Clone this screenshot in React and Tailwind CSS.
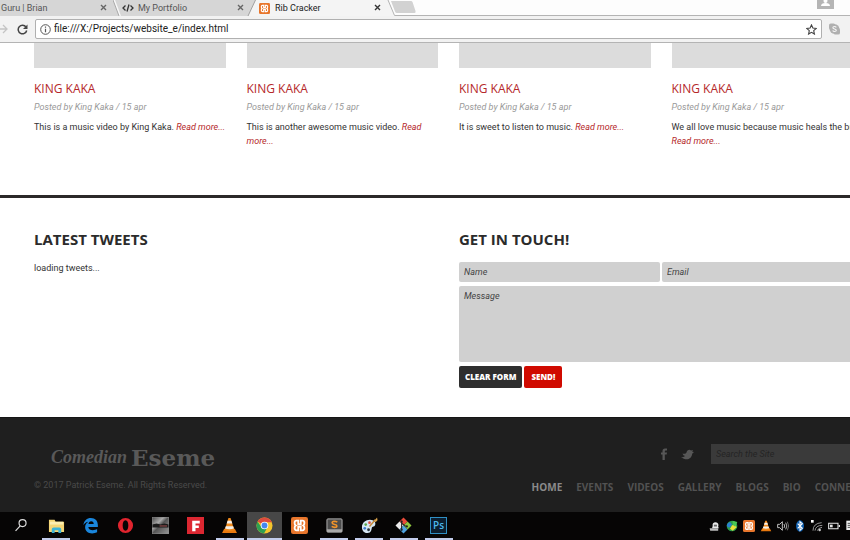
import React from "react";

const posts = [
  { text: "This is a music video by King Kaka." },
  { text: "This is another awesome music video." },
  { text: "It is sweet to listen to music." },
  { text: "We all love music because music heals the brain." },
];

const navItems = ["HOME", "EVENTS", "VIDEOS", "GALLERY", "BLOGS", "BIO", "CONNECT"];

function Close({ dark }) {
  return (
    <button type="button" aria-label="Close tab" className={dark ? "text-[#333]" : "text-[#666]"}>
      <svg width="7" height="7" viewBox="0 0 7 7" className="block" stroke="currentColor" strokeWidth="1.4">
        <path d="M1 1l5 5M6 1L1 6" />
      </svg>
    </button>
  );
}

function Xampp({ size }) {
  return (
    <svg width={size} height={size} viewBox="0 0 16 16" className="block">
      <rect width="16" height="16" rx="2" fill="#e8762c" />
      <path
        d="M5.200 3.500H6.800V6.800H9.200V3.500H10.800Q12.600 3.500 12.600 5.600 12.600 7.300 11.500 8 12.600 8.700 12.600 10.400 12.600 12.500 10.800 12.500H9.200V9.200H6.800V12.500H5.200Q3.400 12.500 3.400 10.400 3.400 8.700 4.500 8 3.400 7.300 3.400 5.600 3.400 3.500 5.200 3.500z"
        fill="none"
        stroke="#fff"
        strokeWidth="1.700"
      />
    </svg>
  );
}

function Cone({ size }) {
  return (
    <svg width={size} height={size} viewBox="0 0 16 16" className="block">
      <path d="M3 11h10l2 4H1z" fill="#e8790f" />
      <path d="M7 1h2l3.500 11.500q-4.500 1.500-9 0z" fill="#f08a1c" />
      <path d="M6.200 3.500h3.600l.9 2.700H5.300zM4.500 8.600h7l.7 2.300q-4.200 1.200-8.400 0z" fill="#f4f0ea" />
    </svg>
  );
}

const I = ({ children, s = 17 }) => (
  <svg width={s} height={s} viewBox="0 0 18 18" className="block">
    {children}
  </svg>
);

const apps = [
  {
    name: "Search",
    icon: (
      <I s={14}>
        <circle cx="11" cy="6.500" r="4.500" fill="none" stroke="#ddd" strokeWidth="1.500" />
        <path d="M8 10l-6 6.500" stroke="#ddd" strokeWidth="1.500" />
      </I>
    ),
  },
  {
    name: "File Explorer",
    open: true,
    icon: (
      <I>
        <path d="M1 3h6l1 2h9v11H1z" fill="#f4d676" />
        <path d="M2 5h14v3H2z" fill="#fbeeb0" />
        <path d="M4 17v-4q0-2 2-2h6q2 0 2 2v4h-3v-3H7v3z" fill="#3ab4d8" />
      </I>
    ),
  },
  {
    name: "Edge",
    icon: (
      <I>
        <path
          d="M1.500 8.500C2 3.800 5.200 1 9.400 1c4.800 0 7.400 3.300 7.400 7.600v1.900H6.700c.2 2.500 2.300 3.500 4.700 3.500 1.800 0 3.300-.5 4.600-1.200v3.400c-1.500.8-3.300 1.200-5.200 1.200-4.600 0-7.500-2.500-7.500-6.500 0-2.700 1.400-4.700 3.400-5.800C4.600 5.400 2.800 6.500 1.500 8.500zM6.800 7.500h5.600c0-1.900-.9-3-2.700-3-1.600 0-2.600 1.100-2.900 3z"
          fill="#1a86dc"
        />
      </I>
    ),
  },
  {
    name: "Opera",
    icon: (
      <I>
        <path
          fillRule="evenodd"
          d="M9 1a8 8 0 1 0 0 16A8 8 0 0 0 9 1zm0 2.500c2 0 3 2.500 3 5.500s-1 5.500-3 5.500S6 12 6 9s1-5.500 3-5.500z"
          fill="#e0242e"
        />
      </I>
    ),
  },
  {
    name: "Wallpaper",
    icon: (
      <I>
        <defs>
          <linearGradient id="sky" x1="0" y1="0" x2="1" y2="1">
            <stop offset="0" stopColor="#444" />
            <stop offset=".35" stopColor="#aaa" />
            <stop offset=".5" stopColor="#555" />
            <stop offset="1" stopColor="#999" />
          </linearGradient>
        </defs>
        <rect width="18" height="18" fill="url(#sky)" />
        <path d="M0 8l5-1 4 1 4-1 5 1v3H0z" fill="#1b1b1b" />
        <path d="M8 9.500h8" stroke="#a55" />
        <rect width="18" height="18" fill="none" stroke="#888" />
      </I>
    ),
  },
  {
    name: "Flash",
    icon: (
      <I>
        <rect width="18" height="18" fill="#dc2731" />
        <path d="M5.500 4h8v3H9v2h3.500v2.700H9V15H5.500z" fill="#fff" />
      </I>
    ),
  },
  { name: "VLC", open: true, icon: <Cone size={17} /> },
  {
    name: "Chrome",
    open: true,
    active: true,
    icon: (
      <I>
        <circle cx="9" cy="9" r="8.500" fill="#f5c52d" />
        <path d="M9 9L1.640 4.750A8.500 8.500 0 0 1 16.360 4.750L17 5.500H9z" fill="#dd4b3e" />
        <path d="M1.640 4.750A8.500 8.500 0 0 0 8.500 17.480L12 11 6 11z" fill="#2ea052" />
        <circle cx="9" cy="9" r="4" fill="#fff" />
        <circle cx="9" cy="9" r="3.100" fill="#4587ee" />
      </I>
    ),
  },
  { name: "XAMPP", icon: <Xampp size={17} /> },
  {
    name: "Sublime Text",
    open: true,
    icon: (
      <I>
        <rect x="1" y="2" width="16" height="14" rx="1" fill="#4c4c4c" stroke="#b5b5b5" />
        <path d="M1 13h16v3H1z" fill="#aaa" />
        <path d="M12 5.500q-1.500-1-3.300-1Q6.500 4.600 6.500 6.200c0 2.400 5 1.200 5 3.300q0 1.500-2.500 1.500-1.500 0-3-1" fill="none" stroke="#f29429" strokeWidth="1.700" />
      </I>
    ),
  },
  {
    name: "Paint",
    open: true,
    icon: (
      <I>
        <path d="M1 11C1 6 5 3 9.500 3S16 6 15 8.500s-3 1-3.500 3S11 17 7 17s-6-3-6-6z" fill="#d6e6f2" />
        <circle cx="5" cy="8" r="1.400" fill="#5aa94b" />
        <circle cx="9" cy="6" r="1.400" fill="#e34a3c" />
        <circle cx="4" cy="12" r="1.400" fill="#3f7fd0" />
        <circle cx="8" cy="13.500" r="1.500" fill="#26323c" />
        <path d="M9 10l6-7" stroke="#c78a3a" strokeWidth="1.500" />
        <path d="M14 4l3-3.500.5 3-2 2z" fill="#d9a34c" />
      </I>
    ),
  },
  {
    name: "Git",
    open: true,
    icon: (
      <I>
        <path d="M9 .5L13.200 4.700 9 9 4.800 4.700z" fill="#ea4b3a" />
        <path d="M4.800 4.800L9 9l-4.200 4.200L.5 9z" fill="#ececec" />
        <path d="M13.200 4.800L17.500 9l-4.300 4.200L9 9z" fill="#8ec63f" />
        <path d="M9 9l4.200 4.300L9 17.500l-4.200-4.200z" fill="#4fa3e0" />
        <path d="M7 4v10M7 6.500L11.500 10" stroke="#222" strokeWidth="1.100" />
        <circle cx="7" cy="5" r="1.200" fill="#222" />
        <circle cx="7" cy="13.500" r="1.200" fill="#222" />
        <circle cx="12.500" cy="10" r="1.200" fill="#222" />
      </I>
    ),
  },
  {
    name: "Photoshop",
    open: true,
    icon: (
      <span className="flex size-[17px] items-center justify-center border border-[#2f8fc4] bg-[#0b1e30] font-['Open_Sans',sans-serif] text-[10px] leading-none font-semibold text-[#4db8ee]">
        Ps
      </span>
    ),
  },
];

const tray = [
  {
    name: "Device",
    icon: (
      <I s={11}>
        <path d="M6 8q-1-6 5-6 6 1 4 7l1 3H5z" fill="#e8e8e8" />
        <path d="M1 12h14v4H2z" fill="#bbb" />
        <path d="M8 6h5v3H8z" fill="#666" />
      </I>
    ),
  },
  {
    name: "Download Manager",
    icon: (
      <I s={12}>
        <circle cx="9" cy="9" r="8" fill="#2c9c4c" />
        <path d="M1 8q1-4 5-5l3 4-3 4q-4 1-5-3z" fill="#2a7fd0" />
        <path d="M9 8l5-1 2 4-6 5-4-3z" fill="#e9e03a" />
        <path d="M10 1l7 2-3 7-4-3z" fill="#49c655" />
      </I>
    ),
  },
  { name: "XAMPP", icon: <Xampp size={12} /> },
  { name: "VLC", icon: <Cone size={12} /> },
  {
    name: "Volume",
    icon: (
      <I s={12}>
        <path d="M1 6.500h3l4-4v13l-4-4H1z" fill="none" stroke="#ddd" strokeWidth="1.300" />
        <path d="M10.500 6q2 3 0 6M13 4q3.500 5 0 10" fill="none" stroke="#ccc" strokeWidth="1.300" />
        <path d="M15.500 2.500q4 6.500 0 13" fill="none" stroke="#777" strokeWidth="1.300" />
      </I>
    ),
  },
  {
    name: "Bluetooth",
    icon: (
      <I s={12}>
        <ellipse cx="9" cy="9" rx="6" ry="8.500" fill="#0f5fae" />
        <path d="M5.500 5.500l7 7L9 15.500v-13l3.500 3-7 7" fill="none" stroke="#fff" strokeWidth="1.600" />
      </I>
    ),
  },
  {
    name: "Network",
    icon: (
      <I s={12}>
        <path d="M3 16Q3 5 16 4M6 16Q7 8 17 8M9.500 16q1-4 7-5" fill="none" stroke="#aaa" strokeWidth="1.300" />
        <circle cx="13" cy="15" r="1.800" fill="#ccc" />
        <path d="M0 0h4v4H0z" fill="#fff" />
      </I>
    ),
  },
  {
    name: "Battery",
    icon: (
      <I s={12}>
        <path d="M1 5h14v8H1z" fill="none" stroke="#e5e5e5" strokeWidth="1.600" />
        <path d="M3 7h4v4H3z" fill="#e5e5e5" />
        <path d="M16 7.500h2v3h-2z" fill="#e5e5e5" />
      </I>
    ),
  },
  {
    name: "Notifications",
    icon: (
      <I s={12}>
        <path d="M2 1h16v14H2z" fill="#eee" />
        <path d="M4 5h12M4 8h12M4 11h12" stroke="#333" strokeWidth="1.300" />
      </I>
    ),
  },
];

function Browser() {
  return (
    <header className="text-[#333]">
      <div className="flex h-4 bg-[#fdfdfd] leading-[14px]">
        <div className="flex w-[113px] items-center justify-between bg-[#d6d6d6] pl-px text-[#555]">
          <span>Guru | Brian</span>
          <span className="mr-[6px]"><Close /></span>
        </div>
        <svg width="9" height="16" viewBox="0 0 9 16" className="block shrink-0">
          <path d="M0 0h9v16H0z" fill="#d6d6d6" />
          <path d="M1 0q3 8 6 16" fill="none" stroke="#f8f8f8" strokeWidth="2" />
          <path d="M0 0q3 8 6 16" fill="none" stroke="#a8a8a8" />
        </svg>
        <div className="flex w-[125px] items-center bg-[#d6d6d6] text-[#555]">
          <svg width="12" height="8" viewBox="0 0 12 8" className="mr-1 block" fill="none" stroke="#333" strokeWidth="1.300">
            <path d="M3.500 1.500L1 4l2.500 2.500M8.500 1.500L11 4 8.500 6.500M7 .5l-2 7" />
          </svg>
          <span>My Portfolio</span>
          <span className="mr-[3px] ml-auto"><Close /></span>
        </div>
        <svg width="9" height="16" viewBox="0 0 9 16" className="block shrink-0">
          <path d="M0 0h9v16H0z" fill="#d6d6d6" />
          <path d="M8.500 0L1 16h8V0z" fill="#f4f4f4" />
          <path d="M8.500 0L1 16" stroke="#a0a0a0" />
        </svg>
        <div className="flex w-[130px] items-center bg-[#f4f4f4] pl-[3px] text-[#222]">
          <Xampp size={11} />
          <span className="ml-[5px]">Rib Cracker</span>
          <span className="mr-[5px] ml-auto"><Close dark /></span>
        </div>
        <svg width="30" height="16" viewBox="0 0 30 16" className="block shrink-0">
          <path d="M0 0h2l7 16H0z" fill="#f4f4f4" />
          <path d="M2 0l6.500 15.500H30" fill="none" stroke="#b4b4b4" />
          <path d="M5 1h20q1 0 1.500 1l3 9q.5 2-1 2H11q-1.500 0-2-1.500z" fill="#d2d2d2" />
        </svg>
        <div className="flex flex-1 justify-end border-b border-[#b4b4b4] pr-4">
          <div className="flex h-[9px] w-[17px] items-start justify-center bg-[#b5b5b5]">
            <svg width="9" height="6" viewBox="0 0 9 6" className="block">
              <circle cx="4.500" cy="1" r="2" fill="#fff" />
              <path d="M0 6q0-3 4.500-3T9 6z" fill="#fff" />
            </svg>
          </div>
        </div>
      </div>
      <div className="flex h-[27px] items-center border-b border-[#b4b4b4] bg-[#f2f2f2]">
        <button type="button" aria-label="Forward" className="mr-[9px]">
          <svg width="8" height="10" viewBox="0 0 8 10" className="block" fill="none" stroke="#c4c4c4" strokeWidth="1.300">
            <path d="M0 5h7M3 1l4 4-4 4" />
          </svg>
        </button>
        <button type="button" aria-label="Reload" className="mr-[7px]">
          <svg width="11" height="11" viewBox="0 0 11 11" className="block">
            <path d="M9 3A4.300 4.300 0 1 0 9.700 6.500" fill="none" stroke="#444" strokeWidth="1.500" />
            <path d="M10.500.5v4.500H6z" fill="#444" />
          </svg>
        </button>
        <div className="flex h-5 flex-1 items-center rounded-[2px] border border-[#b0b0b0] bg-white px-1">
          <svg width="11" height="11" viewBox="0 0 11 11" className="mr-[3px] block" fill="none" stroke="#555">
            <circle cx="5.500" cy="5.500" r="4.800" />
            <path d="M5.500 4.800v3.500M5.500 2.500v1.200" strokeWidth="1.200" />
          </svg>
          <input
            aria-label="Address"
            defaultValue="file:///X:/Projects/website_e/index.html"
            className="min-w-0 flex-1 text-[10px] leading-4 text-[#222] outline-none"
          />
          <button type="button" aria-label="Bookmark this page">
            <svg width="11" height="11" viewBox="0 0 12 12" className="block" fill="none" stroke="#444" strokeWidth="1.200">
              <path d="M6 1l1.500 3.400 3.700.4-2.800 2.500.8 3.700L6 9.100 2.800 11l.8-3.700L.8 4.800l3.700-.4z" />
            </svg>
          </button>
        </div>
        <button type="button" aria-label="Skype" className="mr-[10px] ml-[7px]">
          <svg width="11" height="12" viewBox="0 0 12 12" className="block">
            <rect x="0" y="0" width="7" height="7" rx="2" fill="#b0b0b0" />
            <rect x="5" y="5" width="7" height="7" rx="2" fill="#b0b0b0" />
            <circle cx="6" cy="6" r="5.300" fill="#b0b0b0" />
            <path d="M8 4.200Q7.300 3.300 6 3.300q-1.800 0-1.800 1.300C4.200 6.200 8 5.600 8 7.300q0 1.400-2 1.400-1.400 0-2-1" fill="none" stroke="#f5f5f5" strokeWidth="1.200" />
          </svg>
        </button>
      </div>
    </header>
  );
}

const field =
  "block w-full rounded-[2px] bg-[#d0d0d0] px-[5px] italic placeholder:text-[#444] placeholder:opacity-100";

export default function App() {
  return (
    <div className="flex min-h-screen flex-col overflow-x-hidden bg-white font-[Roboto,sans-serif] text-[9px] leading-[14px] text-[#333]">
      <Browser />
      <main className="grow">
        <section className="-mr-[13px] grid grid-cols-4 gap-[21px] border-b-[3px] border-[#2b2929] pb-[47px] pl-[34px]">
          {posts.map((p) => (
            <article key={p.text}>
              <div className="h-[25px] bg-[#dcdcdc]" />
              <h3 className="mt-3 font-['Open_Sans',sans-serif] text-[12px] leading-[18px] text-[#b5282a]">KING KAKA</h3>
              <p className="mt-0.5 text-[#999] italic">Posted by King Kaka / 15 apr</p>
              <p className="mt-1.5 -mr-2">
                {p.text}{" "}
                <a href="#read" className="text-[#b5282a] italic">
                  Read more...
                </a>
              </p>
            </article>
          ))}
        </section>
        <section className="-mr-[13px] grid grid-cols-2 gap-[21px] pt-[31px] pb-7 pl-[34px]">
          <div>
            <h2 className="font-['Open_Sans',sans-serif] text-[15px] leading-5 font-bold text-[#2b2b2b]">LATEST TWEETS</h2>
            <p className="mt-3">loading tweets...</p>
          </div>
          <form>
            <h2 className="font-['Open_Sans',sans-serif] text-[15px] leading-5 font-bold text-[#2b2b2b]">GET IN TOUCH!</h2>
            <div className="mt-[13px] grid grid-cols-2 gap-x-0.5 gap-y-1">
              <input aria-label="Name" placeholder="Name" className={`${field} h-5`} />
              <input aria-label="Email" placeholder="Email" className={`${field} h-5`} />
              <textarea aria-label="Message" placeholder="Message" className={`${field} col-span-2 h-[76px] resize-none py-[3px]`} />
            </div>
            <div className="mt-1 flex gap-0.5 font-['Open_Sans',sans-serif] text-[8px] leading-[22px] font-extrabold text-white">
              <button type="reset" className="rounded-[2px] bg-[#2e2e2e] px-[6px]">CLEAR FORM</button>
              <button type="button" className="rounded-[2px] bg-[#d00a00] px-[7px]">SEND!</button>
            </div>
          </form>
        </section>
      </main>
      <footer className="border-t border-[#151515] bg-[#1f1f1f]">
        <div className="-mr-[13px] flex justify-between pt-[26px] pb-[18px] pl-[34px]">
          <div>
            <div className="ml-[17px] flex h-[26px] items-center gap-1 whitespace-nowrap text-[#595959]">
              <span className="font-['Brush_Script_MT','Liberation_Serif',serif] text-[18px] leading-none font-bold italic">Comedian</span>
              <span className="font-['DejaVu_Serif',serif] text-[23px] leading-none font-bold">Eseme</span>
            </div>
            <p className="mt-2 text-[#4a4a4a]">© 2017 Patrick Eseme. All Rights Reserved.</p>
          </div>
          <div>
            <div className="flex items-center justify-end">
              <a href="#facebook" aria-label="Facebook" className="mr-[14px]">
                <svg width="6" height="12" viewBox="0 0 6 12" className="block">
                  <path d="M1.500 12V6.500H0v-2h1.500V3Q1.500.5 4 .5h2v2H4.700q-.9 0-.9.9v1.100H6l-.3 2H3.800V12z" fill="#575757" />
                </svg>
              </a>
              <a href="#twitter" aria-label="Twitter" className="mr-[17px]">
                <svg width="13" height="11" viewBox="0 0 13 11" className="block">
                  <path d="M0 8q3 .5 4-1-2-.5-2.500-2.500C3 5 5 5 5.500 3.500 6 1 8.500 0 10 1.500L12 1l-.8 1.800L13 3l-1.800 1.700C11 9 6 13 0 8z" fill="#575757" />
                </svg>
              </a>
              <input
                type="search"
                aria-label="Search the Site"
                placeholder="Search the Site"
                className="h-5 w-[152px] bg-[#3a3a3a] px-[5px] italic placeholder:text-[#242424] placeholder:opacity-100"
              />
            </div>
            <nav className="mt-4 flex gap-[14px] font-['Open_Sans',sans-serif] text-[10px] leading-[14px] font-bold text-[#525252]">
              {navItems.map((n, i) => (
                <a key={n} href="#nav" className={i === 0 ? "text-[#8a8a8a]" : ""}>
                  {n}
                </a>
              ))}
            </nav>
          </div>
        </div>
      </footer>
      <div className="flex h-7 bg-[#060505]">
        <div className="ml-1 grid w-[452px] grid-cols-13">
          {apps.map((a) => (
            <button
              key={a.name}
              type="button"
              aria-label={a.name}
              className={`flex flex-col items-center ${a.active ? "bg-[#474747]" : ""}`}
            >
              <span className="flex h-[26px] items-center">{a.icon}</span>
              <span className={`h-0.5 ${a.active ? "w-full" : "w-7"} ${a.open ? "bg-[#c3cdec]" : ""}`} />
            </button>
          ))}
        </div>
        <div className="-mr-[9px] ml-auto flex">
          {tray.map((t) => (
            <button key={t.name} type="button" aria-label={t.name} className="flex w-[17px] items-center justify-center">
              {t.icon}
            </button>
          ))}
        </div>
      </div>
    </div>
  );
}
